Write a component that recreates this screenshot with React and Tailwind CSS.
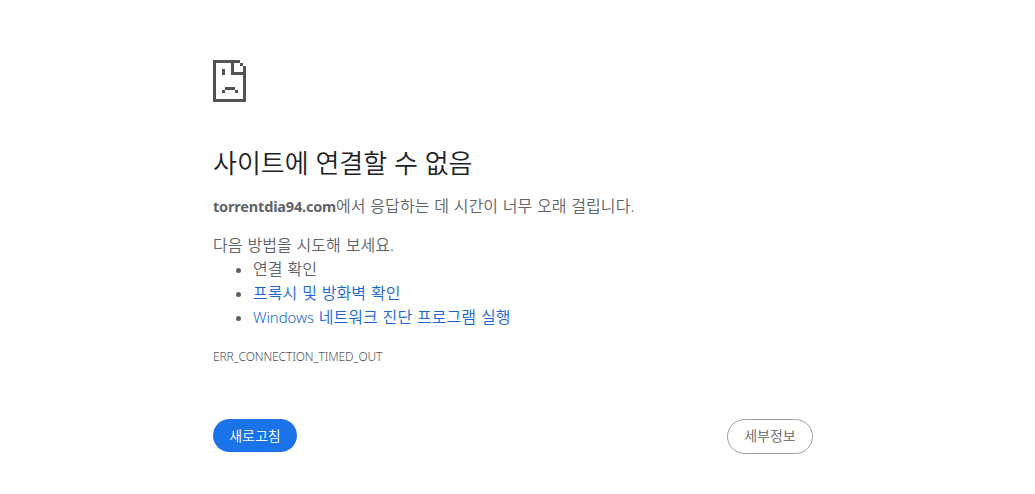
const SadPageIcon = () => (
    <svg width="33" height="42" viewBox="0 0 33 42" fill="#535353" shapeRendering="crispEdges">
        <path d="M0 0h27v3H21v9h9V6h3v36H0zM3 3v36h27V15H18V3z" fillRule="evenodd" />
        <path d="M27 3h3v3h-3zM9 9h3v6H9zM12 27h10v3H12zM9 30h3v3H9zM22 30h3v3h-3z" />
    </svg>
);

const suggestions = [
    { text: "연결 확인" },
    { text: "프록시 및 방화벽 확인", link: true },
    { prefix: "Windows", text: " 네트워크 진단 프로그램 실행", link: true },
];

const SuggestionText = ({ prefix, text }) => (
    <>
        {prefix && <span className="font-light tracking-[-0.1px]">{prefix}</span>}
        <span className="text-base leading-6 tracking-[0.06px] [word-spacing:0.6px]">{text}</span>
    </>
);

const App = () => {
    return (
        <div className="h-[494px] overflow-hidden bg-white font-['Noto_Sans','Noto_Sans_CJK_KR',sans-serif] text-base leading-6 font-[350] text-[#5f6368]">
            <main className="ml-[213px] w-[600px] pt-[60px]">
                <SadPageIcon />

                {/* Message */}
                <h1 className="mt-[43px] text-[26px] leading-9 font-[350] whitespace-nowrap text-[#202124]">
                    사이트에 연결할 수 없음
                </h1>
                <p className="mt-[13px] whitespace-nowrap">
                    <strong className="text-[14.5px] font-bold tracking-[-0.18px]">torrentdia94.com</strong>
                    <span className="tracking-[0.06px] [word-spacing:0.5px]">에서 응답하는 데 시간이 너무 오래 걸립니다.</span>
                </p>

                {/* Suggestions */}
                <p className="mt-[15px] tracking-[0.06px] [word-spacing:0.6px]">다음 방법을 시도해 보세요.</p>
                <ul className="list-disc pl-10 text-[15px] leading-6">
                    {suggestions.map((item) => (
                        <li key={item.text} className="h-6">
                            {item.link ? (
                                <a href="#" className="text-[#1967d2]">
                                    <SuggestionText {...item} />
                                </a>
                            ) : (
                                <SuggestionText {...item} />
                            )}
                        </li>
                    ))}
                </ul>
                <div className="mt-4 text-xs leading-6 font-light tracking-[-0.12px] text-[#4f5358]">ERR_CONNECTION_TIMED_OUT</div>

                {/* Buttons */}
                <div className="mt-[50px] flex items-start justify-between text-sm">
                    <button className="h-[33px] w-[84px] rounded-full bg-[#1a73e8] text-white">
                        새로고침
                    </button>
                    <button className="h-[35px] w-[86px] rounded-full border border-[#9aa0a6] pb-0.5">
                        세부정보
                    </button>
                </div>
            </main>
        </div>
    );
};

export default App;
